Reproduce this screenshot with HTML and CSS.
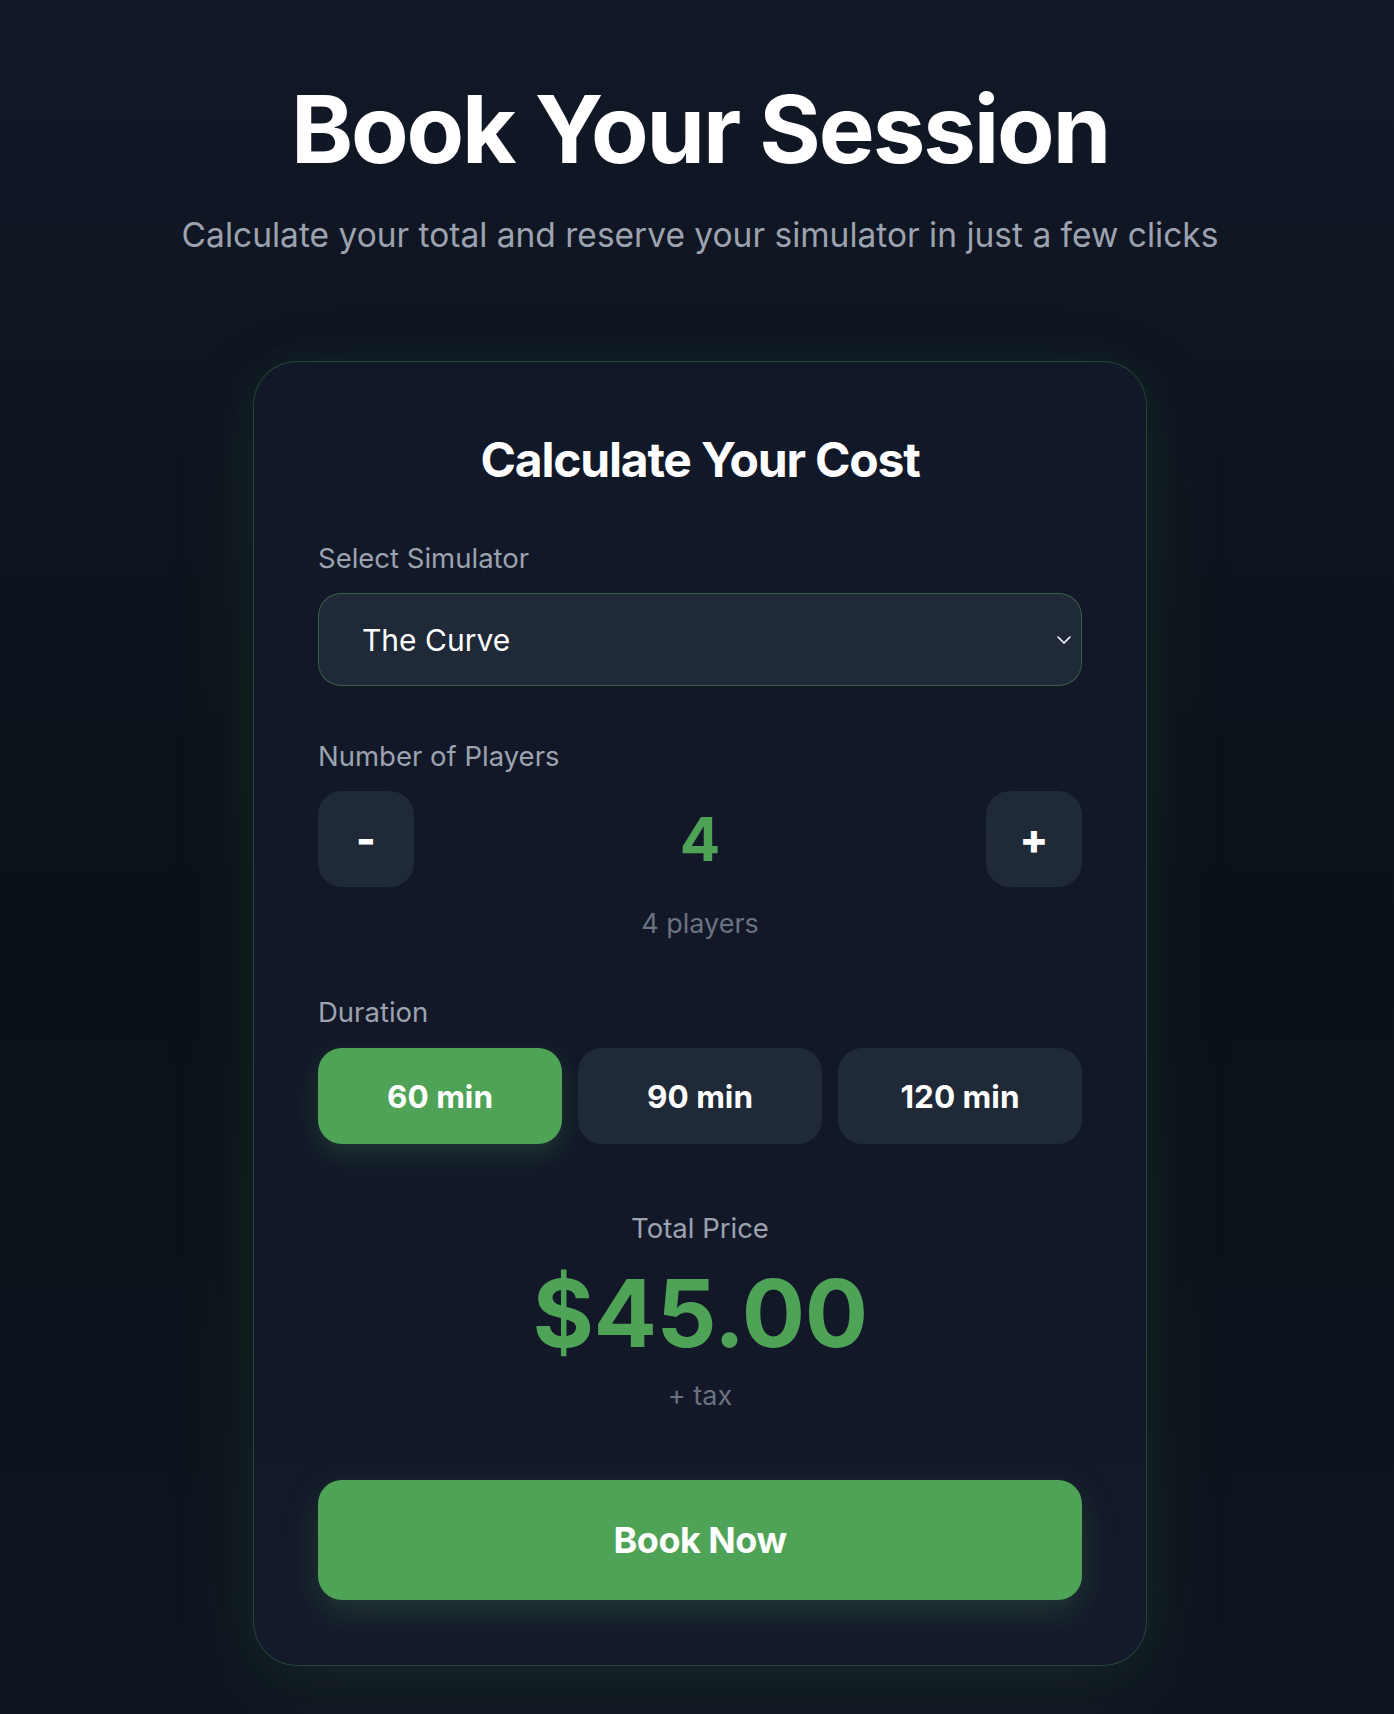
FILE: index.html
```html
<!DOCTYPE html>
<html lang="en">
<head>
<meta charset="utf-8">
<title>Book Your Session</title>
<link rel="stylesheet" href="styles.css">
</head>
<body>
<main class="page">
  <header class="hero">
    <h1 class="hero-title">Book Your Session</h1>
    <p class="hero-sub">Calculate your total and reserve your simulator in just a few clicks</p>
  </header>

  <section class="card">
    <h2 class="card-title">Calculate Your Cost</h2>

    <div class="field">
      <div class="label">Select Simulator</div>
      <div class="select">
        <span class="select-value">The Curve</span>
        <svg class="chevron" width="16" height="10" viewBox="0 0 16 10" fill="none">
          <path d="M2 2 L8 8 L14 2" stroke="#ffffff" stroke-width="1.6" stroke-linecap="round" stroke-linejoin="round"/>
        </svg>
      </div>
    </div>

    <div class="field">
      <div class="label">Number of Players</div>
      <div class="counter">
        <button class="step">-</button>
        <div class="count">4</div>
        <button class="step">+</button>
      </div>
      <div class="count-note">4 players</div>
    </div>

    <div class="field field-duration">
      <div class="label label-duration">Duration</div>
      <div class="durations">
        <button class="dur active">60 min</button>
        <button class="dur">90 min</button>
        <button class="dur">120 min</button>
      </div>
    </div>

    <div class="total">
      <div class="total-label">Total Price</div>
      <div class="total-price">$45.00</div>
      <div class="total-tax">+ tax</div>
    </div>

    <button class="book">Book Now</button>
  </section>
</main>
</body>
</html>
```

FILE: styles.css
```css
* { box-sizing: border-box; }

html, body {
  margin: 0;
  padding: 0;
}

body {
  min-height: 1714px;
  font-family: Inter, "Noto Sans", "Liberation Sans", sans-serif;
  color: #ffffff;
  background: linear-gradient(180deg, #111827 0%, #0e141e 30%, #0b1118 55%, #0d131c 80%, #0f1520 100%);
}

.page {
  display: flex;
  flex-direction: column;
  align-items: center;
  padding: 82px 0 50px 6px;
}

.hero {
  text-align: center;
}

.hero-title {
  margin: 0;
  font-size: 94px;
  line-height: 94px;
  font-weight: 700;
  letter-spacing: -2.1px;
  color: #ffffff;
}

.hero-sub {
  margin: 37px 0 0;
  font-size: 33.5px;
  line-height: 45px;
  color: #9ca3af;
}

.card {
  margin-top: 103px;
  width: 894px;
  padding: 64px 64px 65px;
  border: 1px solid rgba(79, 163, 87, 0.32);
  border-radius: 44px;
  background: linear-gradient(180deg, #111827 0%, #121828 70%, #141a2a 100%);
  box-shadow: 0 24px 90px rgba(79, 163, 87, 0.10), 0 0 50px rgba(79, 163, 87, 0.06);
  display: flex;
  flex-direction: column;
}

.card-title {
  margin: 5px 0 0;
  text-align: center;
  font-size: 48px;
  line-height: 58px;
  font-weight: 700;
  letter-spacing: -1.2px;
}

.field {
  margin-top: 50px;
}

.card-title + .field {
  margin-top: 49px;
}

.field-duration {
  margin-top: 48px;
}

.label {
  font-size: 27.5px;
  line-height: 40px;
  color: #9ca3af;
  margin-bottom: 15px;
}

.label-duration {
  margin-bottom: 16px;
}

.select {
  height: 93px;
  display: flex;
  align-items: center;
  justify-content: space-between;
  padding: 0 9px 0 43px;
  background: #1f2937;
  border: 1.5px solid rgba(79, 163, 87, 0.45);
  border-radius: 23px;
}

.select-value {
  font-size: 30px;
  color: #ffffff;
}

.chevron {
  display: block;
}

.counter {
  display: flex;
  align-items: center;
  justify-content: space-between;
  height: 96px;
}

.step {
  width: 96px;
  height: 96px;
  border: none;
  border-radius: 24px;
  background: #1f2937;
  color: #ffffff;
  font-family: inherit;
  font-size: 42px;
  font-weight: 800;
  display: flex;
  align-items: center;
  justify-content: center;
  padding: 0 0 2px;
}

.count {
  font-size: 60px;
  line-height: 60px;
  font-weight: 700;
  color: #4fa357;
}

.count-note {
  margin-top: 17px;
  text-align: center;
  font-size: 27px;
  line-height: 40px;
  color: #6b7280;
}

.durations {
  display: grid;
  grid-template-columns: repeat(3, 1fr);
  gap: 16px;
}

.dur {
  height: 96px;
  border: none;
  border-radius: 24px;
  background: #1f2937;
  color: #ffffff;
  font-family: inherit;
  font-size: 31.5px;
  font-weight: 700;
}

.dur.active {
  background: #4fa357;
  box-shadow: 0 10px 28px rgba(79, 163, 87, 0.22);
}

.total {
  margin-top: 64px;
  text-align: center;
}

.total-label {
  font-size: 27.5px;
  line-height: 40px;
  color: #9ca3af;
}

.total-price {
  margin-top: 9px;
  font-size: 94px;
  line-height: 113px;
  font-weight: 700;
  color: #4fa357;
  letter-spacing: -0.6px;
}

.total-tax {
  margin-top: 6px;
  font-size: 27px;
  line-height: 40px;
  color: #6b7280;
}

.book {
  margin-top: 64px;
  height: 120px;
  width: 100%;
  border: none;
  border-radius: 24px;
  background: #4fa357;
  color: #ffffff;
  font-family: inherit;
  font-size: 36px;
  font-weight: 700;
  letter-spacing: -0.5px;
  box-shadow: 0 12px 34px rgba(79, 163, 87, 0.22);
}
```
